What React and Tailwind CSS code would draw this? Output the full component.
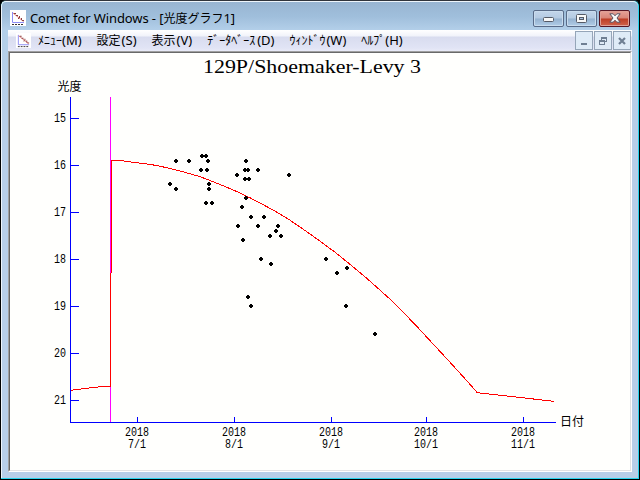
const menus = [
  { label: 'ﾒﾆｭｰ', hotkey: '(M)', box: 'w-[24px]' },
  { label: '設定', hotkey: '(S)', box: 'w-[25px]' },
  { label: '表示', hotkey: '(V)', box: 'w-[25px]' },
  { label: 'ﾃﾞｰﾀﾍﾞｰｽ', hotkey: '(D)', box: 'w-[50px]' },
  { label: 'ｳｨﾝﾄﾞｳ', hotkey: '(W)', box: 'w-[37px]' },
  { label: 'ﾍﾙﾌﾟ', hotkey: '(H)', box: 'w-[24px]' },
]

const magnitudes = [
  { value: 15, y: 118 },
  { value: 16, y: 165 },
  { value: 17, y: 212 },
  { value: 18, y: 259 },
  { value: 19, y: 306 },
  { value: 20, y: 353 },
  { value: 21, y: 400 },
]

const dates = [
  { year: 2018, day: '7/1', x: 137 },
  { year: 2018, day: '8/1', x: 234 },
  { year: 2018, day: '9/1', x: 331 },
  { year: 2018, day: '10/1', x: 426 },
  { year: 2018, day: '11/1', x: 523 },
]

const observations = [
  [176, 161], [189, 161], [202, 156], [206, 156], [208, 161], [201, 170], [207, 170],
  [170, 184], [176, 189], [209, 184], [209, 189], [206, 203], [212, 203], [246, 161],
  [245, 170], [248, 170], [258, 170], [237, 175], [245, 179], [249, 179], [289, 175],
  [246, 198], [242, 207], [251, 217], [264, 217], [238, 226], [258, 226], [278, 226],
  [276, 231], [270, 236], [281, 236], [243, 240], [261, 259], [271, 264], [248, 297],
  [251, 306], [326, 259], [347, 268], [337, 273], [346, 306], [375, 334],
]

const curve =
  '111,160.5 122,160.7 140,163.2 150,164.4 158,165.8 168,168 180,171 190,173.8 200,176.7 210,180.5 ' +
  '220,184.5 230,188.6 240,193 250,197.8 260,203 270,208.4 280,214 290,220.2 300,227 310,234 ' +
  '317,239 335,252.2 350,264.3 367,278.5 388,297.3 403,312 418,327.7 435,346 447,359 458,371 ' +
  '467,381 477,392.3 480,393 554,401.3'

function Text({ x, y, width, className, children }) {
  return (
    <text x={x} y={y} textLength={width} lengthAdjust="spacingAndGlyphs" className={className}>
      {children}
    </text>
  )
}

function GraphIcon({ className }) {
  return (
    <svg viewBox="0 0 16 16" className={className}>
      <rect width="16" height="16" fill="#fff" />
      <path d="M2.5 2v10.5H14" fill="none" stroke="#8c8cf4" />
      <path d="M3 3l10.500 8.500" fill="none" stroke="#e07878" />
      <path d="M4 3h2v1H4zM6 5h2v1H6zM9 6h1v2H9zM8 8h1v1H8zM11 8h1v2h-1zM12 10h2v1h-2z" fill="#8a4040" />
      <path d="M2 14.5h12" stroke="#333" strokeDasharray="2 1" />
    </svg>
  )
}

function WindowButtons() {
  const plain =
    'flex h-[17px] w-[31px] items-center justify-center rounded-[2px] border border-[#596b88] bg-[linear-gradient(#c2d5ea_0%,#b4cae2_48%,#94b1cf_52%,#b1cde8_100%)] shadow-[inset_0_0_0_1px_#c9dcee]'
  return (
    <div className="flex gap-[2px]">
      <div className={plain}>
        <svg viewBox="0 0 11 5" className="mt-[3px] h-[5px] w-[11px]">
          <rect x=".5" y=".5" width="10" height="4" rx="1" fill="#f8f8f8" stroke="#555a66" />
        </svg>
      </div>
      <div className={plain}>
        <svg viewBox="0 0 11 9" className="h-[9px] w-[11px]">
          <rect x=".5" y=".5" width="10" height="8" rx="1" fill="#f8f8f8" stroke="#555a66" />
          <rect x="3.5" y="3.5" width="4" height="2" fill="#a9c1e0" stroke="#555a66" />
        </svg>
      </div>
      <div className="flex h-[17px] w-[31px] items-center justify-center rounded-[2px] border border-[#571523] bg-[linear-gradient(#e6a298_0%,#d88476_48%,#bd3c24_52%,#d0644c_100%)] shadow-[inset_0_0_0_1px_#dfa096]">
        <svg viewBox="0 0 12 10" className="h-[10px] w-[12px]">
          <path
            d="M.8.8h3.4L6 2.8 7.8.8h3.4L8 5l3.2 4.2H7.8L6 7.2 4.2 9.2H.8L4 5z"
            fill="#f8f8f8"
            stroke="#5b5360"
            strokeLinejoin="round"
          />
        </svg>
      </div>
    </div>
  )
}

function ChildButtons() {
  const box = 'flex h-[19px] w-[18px] items-center justify-center border border-[#95a5b8] bg-[#dfebf7]'
  return (
    <div className="flex gap-px">
      <div className={box}>
        <svg viewBox="0 0 10 10" className="h-[10px] w-[10px]" shapeRendering="crispEdges">
          <path d="M2 7h6v2H2z" fill="#6f7f93" />
        </svg>
      </div>
      <div className={box}>
        <svg viewBox="0 0 10 10" className="h-[10px] w-[10px]" shapeRendering="crispEdges">
          <path d="M3 1h6v5H7V5h1V3H4v1H3zM1 4h6v5H1zM2 6v2h4V6z" fill="#6f7f93" fillRule="evenodd" />
        </svg>
      </div>
      <div className={box}>
        <svg viewBox="0 0 10 10" className="h-[10px] w-[10px]">
          <path d="M2 2l6 6M8 2l-6 6" stroke="#6f7f93" strokeWidth="2.2" />
        </svg>
      </div>
    </div>
  )
}

function LightCurve() {
  const digits = 'fill-black font-["Liberation_Mono"] text-[12px]'
  const kanji = 'fill-black font-["Noto_Sans_CJK_JP",sans-serif] text-[12px]'
  return (
    <svg viewBox="10 53 620 417" className="block h-[417px] w-[620px]">
      <Text x={203} y={73} width={218} className='fill-black font-["Liberation_Serif",serif] text-[18px]'>
        129P/Shoemaker-Levy 3
      </Text>
      <Text x={57.5} y={91} width={24} className={kanji}>光度</Text>
      <Text x={560} y={426} width={24} className={kanji}>日付</Text>

      <g shapeRendering="crispEdges">
        {/* axes */}
        <path d="M70 97h1v325h485v1H70z" fill="#0000ff" />
        {magnitudes.map((m) => (
          <rect key={m.value} x="71" y={m.y} width="8" height="1" fill="#0000ff" />
        ))}
        {dates.map((d) => (
          <rect key={d.day} x={d.x} y="417" width="1" height="5" fill="#0000ff" />
        ))}

        {/* perihelion */}
        <rect x="110" y="97" width="1" height="325" fill="#ff00ff" />

        {/* predicted brightness */}
        <polyline points="71,390.3 81,389 91,387.8 101,386.7 111,386" fill="none" stroke="#ff0000" />
        <rect x="110" y="273" width="1" height="113" fill="#ff0000" />
        <rect x="111" y="160" width="1" height="113" fill="#ff0000" />
        <polyline points={curve} fill="none" stroke="#ff0000" />

        {observations.map(([x, y]) => (
          <path key={`${x}-${y}`} d={`M${x - 1} ${y - 2}h2v1h1v2h-1v1h-2v-1h-1v-2h1z`} fill="#000" />
        ))}
      </g>

      {magnitudes.map((m) => (
        <Text key={m.value} x={54} y={m.y + 4} width={12} className={digits}>{m.value}</Text>
      ))}
      {dates.map((d) => (
        <g key={d.day}>
          <Text x={d.x - 12} y={436} width={24} className={digits}>{d.year}</Text>
          <Text x={d.x - d.day.length * 3} y={448} width={d.day.length * 6} className={digits}>{d.day}</Text>
        </g>
      ))}
    </svg>
  )
}

export default function App() {
  return (
    <div className="h-[480px] w-[640px] overflow-hidden bg-black">
      <div className="flex h-[480px] w-[640px] flex-col rounded-t-[6px] border border-black border-t-[#30343c] bg-[#29d3ec]">
        <div className="mr-px mb-px flex grow flex-col rounded-t-[5px] border-t border-l border-[#eef5fb] bg-[linear-gradient(#98b5d2_0px,#a0bfdc_15px,#b3cfe9_28px,#b8cfe8_120px,#b8cfe8_100%)] pl-[6px] text-[12px] text-black">
          {/* title bar */}
          <div className="flex h-[28px] shrink-0 items-center pt-[4px] pr-[8px]">
            <GraphIcon className="ml-[2px] h-4 w-4 shrink-0" />
            <div className="ml-[4px] flex grow items-baseline whitespace-pre leading-[16px]">
              <span className='font-["Noto_Sans",sans-serif] text-[13px] tracking-[-0.1px]'>Comet for Windows - [</span>
              <span className='font-["Noto_Sans_CJK_JP",sans-serif]'>光度グラフ</span>
              <span className='font-["Noto_Sans",sans-serif] text-[13px]'>1]</span>
            </div>
            <WindowButtons />
          </div>

          {/* menu bar */}
          <div className="flex h-[21px] w-[624px] shrink-0 items-center bg-[linear-gradient(#ffffff_0px,#f1f3fa_6px,#d8dcef_7px,#e1e4f5_18px,#e9ebf8_100%)] pr-[1px]">
            <GraphIcon className="ml-[8px] h-[15px] w-[15px] shrink-0" />
            <div className="ml-[7px] flex grow gap-[15px] pb-[2px]">
              {menus.map((m) => (
                <div key={m.hotkey} className="flex items-baseline leading-[16px] whitespace-nowrap">
                  <span className={`${m.box} font-["Noto_Sans_CJK_JP",sans-serif]`}>{m.label}</span>
                  <span className='font-["Noto_Sans",sans-serif] text-[13px]'>{m.hotkey}</span>
                </div>
              ))}
            </div>
            <ChildButtons />
          </div>

          {/* document */}
          <div className="h-[421px] w-[624px] border border-[#a0a0a0] border-r-white border-b-white">
            <div className="h-[419px] w-[622px] border border-[#696969] border-r-[#e3e3e3] border-b-[#e3e3e3] bg-[#fffffd]">
              <LightCurve />
            </div>
          </div>
        </div>
      </div>
    </div>
  )
}
